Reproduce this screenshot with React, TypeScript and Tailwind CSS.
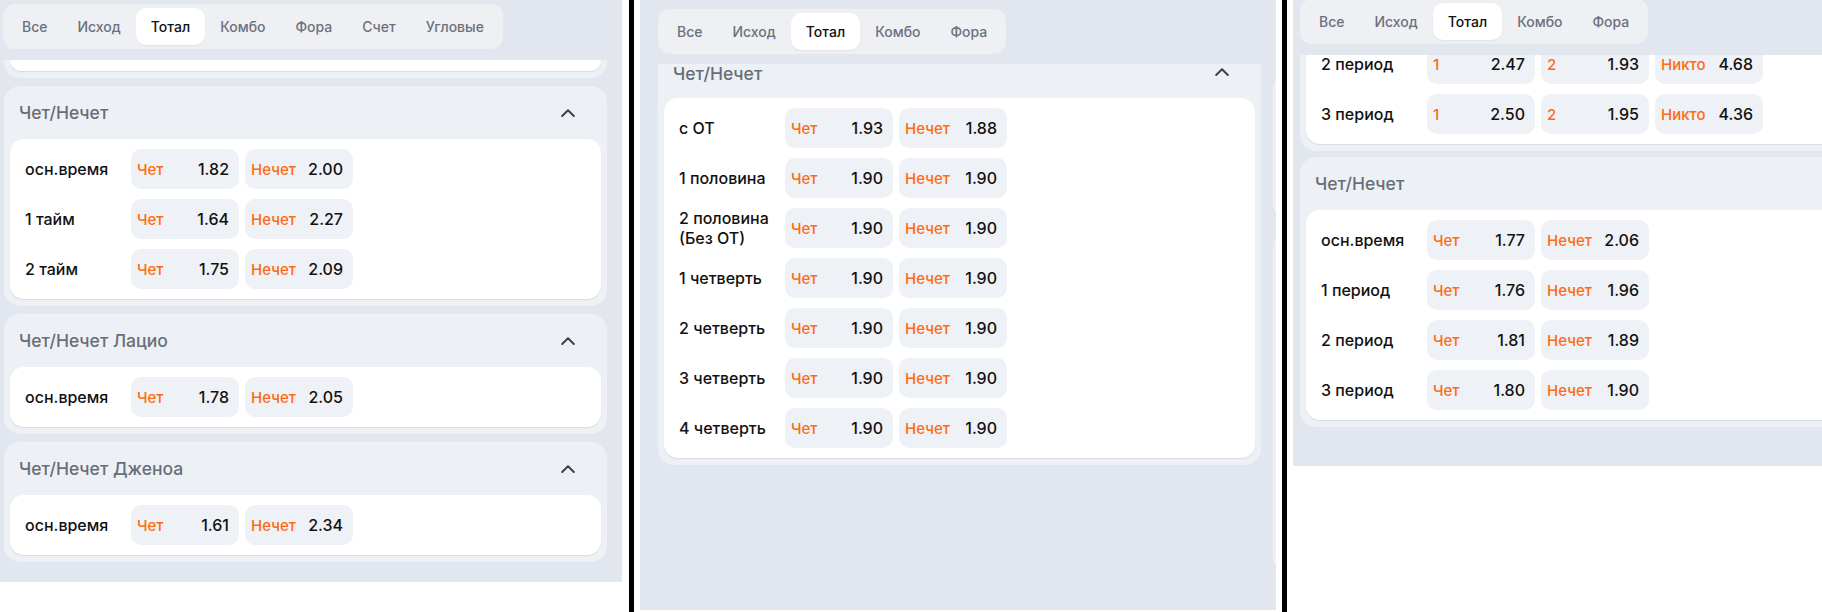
import React from "react";

type Odd = { l: string; v: string };
type Row = { label: string; odds: Odd[] };

const Tabs = ({ items }: { items: string[] }) => (
  <div className="inline-flex p-1 rounded-[12px] bg-[#eef0f4]">
    {items.map((t) => (
      <div
        key={t}
        className={
          t === "Тотал"
            ? "h-[37px] px-[15px] flex items-center rounded-[10px] bg-white text-[14px] font-medium text-[#111111] shadow-[0_1px_2px_rgba(0,0,0,0.06)]"
            : "h-[37px] px-[15px] flex items-center rounded-[10px] text-[14px] font-medium text-[#6b717d]"
        }
      >
        {t}
      </div>
    ))}
  </div>
);

const Btn = ({ o }: { o: Odd }) => (
  <div className="w-[108px] h-[40px] shrink-0 rounded-[10px] bg-[#eef1f5] flex items-center justify-between pl-[6px] pr-[10px]">
    <span className="text-[15px] leading-none font-medium text-[#ff6a13]">{o.l}</span>
    <span className="text-[16px] leading-none font-medium text-[#111111]">{o.v}</span>
  </div>
);

const RowView = ({ r }: { r: Row }) => (
  <div className="flex items-center h-[40px]">
    <div
      className={
        r.label.length > 14
          ? "w-[106px] shrink-0 text-[16px] leading-[20px] font-medium text-[#111111]"
          : "w-[106px] shrink-0 text-[16px] leading-none font-medium text-[#111111]"
      }
    >
      {r.label}
    </div>
    <div className="flex gap-[6px]">
      {r.odds.map((o, i) => (
        <Btn key={i} o={o} />
      ))}
    </div>
  </div>
);

const Card = ({ rows, topFlat }: { rows: Row[]; topFlat?: boolean }) => (
  <div
    className={
      (topFlat ? "rounded-b-[14px] " : "rounded-[14px] ") +
      "bg-white px-[15px] py-[10px] flex flex-col gap-[10px] shadow-[0_1px_1px_rgba(30,40,60,0.10)]"
    }
  >
    {rows.map((r, i) => (
      <RowView key={i} r={r} />
    ))}
  </div>
);

const Chevron = () => (
  <svg width="14" height="8" viewBox="0 0 14 8" fill="none">
    <polyline points="1.2,7 7,1.3 12.8,7" stroke="#3b4250" strokeWidth="2" strokeLinecap="round" strokeLinejoin="round" />
  </svg>
);

const Section = ({ title, rows, shifted }: { title: string; rows: Row[]; shifted?: boolean }) => (
  <div className="w-[603px] shrink-0 rounded-[16px] bg-[#edf0f4] px-[6px] pb-[7px]">
    <div className="h-[53px] flex items-center justify-between pl-[9px] pr-[26px]">
      <span
        className={
          shifted
            ? "mt-[5px] text-[17.5px] leading-none font-medium text-[#686e79]"
            : "text-[17.5px] leading-none font-medium text-[#686e79]"
        }
      >
        {title}
      </span>
      <Chevron />
    </div>
    <Card rows={rows} />
  </div>
);

const ch = (a: string, b: string): Odd[] => [
  { l: "Чет", v: a },
  { l: "Нечет", v: b },
];

const tabs7 = ["Все", "Исход", "Тотал", "Комбо", "Фора", "Счет", "Угловые"];
const tabs5 = ["Все", "Исход", "Тотал", "Комбо", "Фора"];

const Panel1 = () => (
  <div className="w-[622px] h-[582px] shrink-0 bg-[#e2e6ee] flex flex-col overflow-hidden">
    <div className="h-[60px] shrink-0 pt-1 pl-[3px]">
      <Tabs items={tabs7} />
    </div>
    <div className="flex-1 overflow-hidden pl-1 flex flex-col gap-2">
      <div className="w-[603px] h-[18px] shrink-0 rounded-b-[16px] bg-[#edf0f4] px-[6px]">
        <div className="h-[11px] bg-white rounded-b-[14px] shadow-[0_1px_1px_rgba(30,40,60,0.10)]" />
      </div>
      <Section
        title="Чет/Нечет"
        rows={[
          { label: "осн.время", odds: ch("1.82", "2.00") },
          { label: "1 тайм", odds: ch("1.64", "2.27") },
          { label: "2 тайм", odds: ch("1.75", "2.09") },
        ]}
      />
      <Section title="Чет/Нечет Лацио" rows={[{ label: "осн.время", odds: ch("1.78", "2.05") }]} />
      <Section title="Чет/Нечет Дженоа" rows={[{ label: "осн.время", odds: ch("1.61", "2.34") }]} />
    </div>
  </div>
);

const Panel2 = () => (
  <div className="w-[636px] h-[610px] shrink-0 bg-[#e2e6ee] flex flex-col overflow-hidden">
    <div className="h-[64px] shrink-0 pt-[9px] pl-[18px]">
      <Tabs items={tabs5} />
    </div>
    <div className="flex-1 overflow-hidden pl-[18px]">
      <div className="flex items-start gap-3 mt-[-19px]">
        <Section
          shifted
          title="Чет/Нечет"
          rows={[
            { label: "с ОТ", odds: ch("1.93", "1.88") },
            { label: "1 половина", odds: ch("1.90", "1.90") },
            { label: "2 половина (Без ОТ)", odds: ch("1.90", "1.90") },
            { label: "1 четверть", odds: ch("1.90", "1.90") },
            { label: "2 четверть", odds: ch("1.90", "1.90") },
            { label: "3 четверть", odds: ch("1.90", "1.90") },
            { label: "4 четверть", odds: ch("1.90", "1.90") },
          ]}
        />
        <div className="w-[603px] shrink-0 flex flex-col gap-[10px] pt-[28px]">
          <div className="h-[147px] rounded-[16px] bg-[#edf0f4]" />
          <div className="h-[343px] rounded-[16px] bg-[#edf0f4]" />
        </div>
      </div>
    </div>
  </div>
);

const Panel3 = () => (
  <div className="w-[529px] h-[466px] shrink-0 bg-[#e2e6ee] flex flex-col overflow-hidden">
    <div className="h-[55px] shrink-0 pl-[7px]">
      <div className="mt-[-1px]">
        <Tabs items={tabs5} />
      </div>
    </div>
    <div className="flex-1 overflow-hidden pl-[7px]">
      <div className="flex flex-col gap-[6px] mt-[-21px]">
        <div className="w-[603px] shrink-0 rounded-b-[16px] bg-[#edf0f4] px-[6px] pb-[7px]">
          <Card
            topFlat
            rows={[
              {
                label: "2 период",
                odds: [
                  { l: "1", v: "2.47" },
                  { l: "2", v: "1.93" },
                  { l: "Никто", v: "4.68" },
                ],
              },
              {
                label: "3 период",
                odds: [
                  { l: "1", v: "2.50" },
                  { l: "2", v: "1.95" },
                  { l: "Никто", v: "4.36" },
                ],
              },
            ]}
          />
        </div>
        <Section
          title="Чет/Нечет"
          rows={[
            { label: "осн.время", odds: ch("1.77", "2.06") },
            { label: "1 период", odds: ch("1.76", "1.96") },
            { label: "2 период", odds: ch("1.81", "1.89") },
            { label: "3 период", odds: ch("1.80", "1.90") },
          ]}
        />
      </div>
    </div>
  </div>
);

export default function App() {
  return (
    <div className="w-[1822px] h-[612px] bg-white flex items-start overflow-hidden font-['Inter','Noto_Sans',sans-serif]">
      <Panel1 />
      <div className="w-[7px] shrink-0" />
      <div className="w-[5px] h-[612px] shrink-0 bg-black" />
      <div className="w-[6px] shrink-0" />
      <Panel2 />
      <div className="w-[6px] shrink-0" />
      <div className="w-[5px] h-[612px] shrink-0 bg-black" />
      <div className="w-[6px] shrink-0" />
      <Panel3 />
    </div>
  );
}
